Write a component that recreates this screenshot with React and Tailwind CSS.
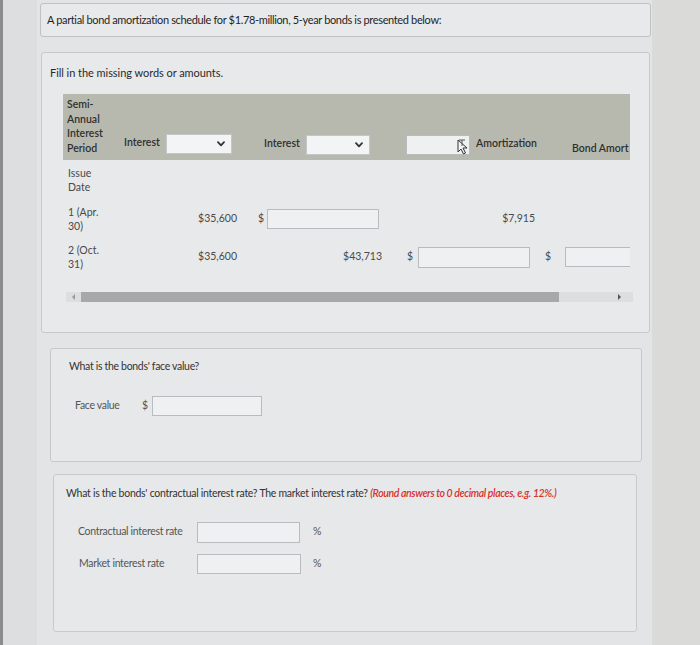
import React from "react";

function Chevron() {
  return (
    <svg width="8" height="6" viewBox="0 0 8 6" className="shrink-0">
      <path d="M1 1.2 L4 4.3 L7 1.2" fill="none" stroke="#333" strokeWidth="1.8" strokeLinecap="round" strokeLinejoin="round" />
    </svg>
  );
}

function Select({ w }) {
  return (
    <div className={`h-[20px] ${w} bg-[#f3f4f5] border border-[#c4c6c8] flex items-center justify-end pr-[6px]`}>
      <Chevron />
    </div>
  );
}

function Input({ w, h = "h-[20px]" }) {
  return <div className={`${h} ${w} bg-[#eef0f1] border border-[#b9bcbf]`} />;
}

function Cursor() {
  return (
    <svg width="12" height="16" viewBox="0 0 12 16" className="absolute left-[457px] top-[139px]">
      <path d="M1 1 L1 13 L4 10 L6.5 15 L8.5 14 L6 9 L10 9 Z" fill="#f5f5f5" stroke="#333" strokeWidth="1" strokeLinejoin="round" />
      <path d="M2 1 L8 1 M5 1 L5 7" stroke="#555" strokeWidth="1" />
    </svg>
  );
}

export default function App() {
  return (
    <div className="relative w-[700px] h-[645px] flex overflow-hidden bg-[#e2e4e6] text-[#3a3a3a] font-['Lato','Liberation_Sans',sans-serif]">
      <div className="w-[3px] bg-[#8c8c8c] shrink-0" />
      <div className="w-[34px] shrink-0 bg-[#dcdedf]" />
      <div className="w-[615px] shrink-0 flex flex-col pt-[3px]">
        {/* title box */}
        <div className="ml-[3px] w-[611px] h-[34px] rounded-[3px] border border-[#bfc1c3] bg-[#e7e9eb] flex items-center pl-[6px]">
          <span className="text-[11px] tracking-[-0.35px] text-[#1f1f1f]">
            A partial bond amortization schedule for $1.78-million, 5-year bonds is presented below:
          </span>
        </div>

        {/* table box */}
        <div className="mt-[15px] ml-[4px] w-[609px] h-[281px] rounded-[3px] border border-[#c6c8ca] bg-[#e7e9eb] flex flex-col">
          <div className="pl-[8px] pt-[12px] h-[41px] text-[11px] tracking-[-0.05px] text-[#2a2a2a]">
            Fill in the missing words or amounts.
          </div>
          <div className="ml-[21px] w-[567px] flex flex-col">
            {/* header */}
            <div className="h-[66px] bg-[#b8b9ae] grid grid-cols-[57px_120px_145px_155px_90px] text-[10.5px] font-semibold text-[#2f2f2f]">
              <div className="pl-[4px] pt-[3px] leading-[14.5px]">
                Semi-<br />Annual<br />Interest<br />Period
              </div>
              <div className="flex items-end pb-[6px]">
                <span className="pl-[4px] w-[46px] mb-[3px]">Interest</span>
                <Select w="w-[66px]" />
              </div>
              <div className="flex items-end pb-[5px]">
                <span className="pl-[24px] w-[66px] mb-[3px]">Interest</span>
                <Select w="w-[64px]" />
              </div>
              <div className="flex items-end pb-[5px]">
                <div className="ml-[21px]">
                  <Input w="w-[64px]" />
                </div>
                <span className="pl-[6px] mb-[3px]">Amortization</span>
              </div>
              <div className="flex items-end pb-[3px] overflow-hidden whitespace-nowrap">
                <span className="pl-[32px]">Bond Amort</span>
              </div>
            </div>

            {/* rows */}
            <div className="grid grid-cols-[57px_120px_145px_155px_90px] text-[10.5px] text-[#4a4a4a]">
              <div className="pl-[5px] pt-[6px] leading-[14px] h-[34px]">Issue<br />Date</div>
              <div />
              <div />
              <div />
              <div />

              <div className="pl-[5px] mt-[11px] leading-[14px] h-[28px]">1 (Apr.<br />30)</div>
              <div className="mt-[11px] flex items-center justify-end pr-[3px]">$35,600</div>
              <div className="mt-[11px] flex items-center">
                <span className="pl-[18px] w-[27px]">$</span>
                <Input w="w-[112px]" />
              </div>
              <div className="mt-[11px] flex items-center justify-end pr-[5px]">$7,915</div>
              <div className="mt-[11px]" />

              <div className="pl-[5px] mt-[10px] leading-[14px] h-[28px]">2 (Oct.<br />31)</div>
              <div className="mt-[10px] flex items-center justify-end pr-[3px]">$35,600</div>
              <div className="mt-[10px] flex items-center justify-end pr-[3px]">$43,713</div>
              <div className="mt-[10px] flex items-center">
                <span className="pl-[22px] w-[33px]">$</span>
                <Input w="w-[112px]" h="h-[21px]" />
              </div>
              <div className="mt-[10px] flex items-center overflow-hidden">
                <span className="pl-[5px] w-[25px] shrink-0">$</span>
                <Input w="w-[70px] shrink-0" />
              </div>
            </div>

            {/* scrollbar */}
            <div className="mt-[21px] ml-[3px] w-[567px] h-[10px] bg-[#dcdee0] flex items-center">
              <div className="w-[15px] flex justify-center">
                <div className="w-0 h-0 border-y-[3px] border-y-transparent border-r-[3px] border-r-[#9a9a9a]" />
              </div>
              <div className="w-[478px] h-[10px] bg-[#a7a8a9]" />
              <div className="flex-1 flex justify-end pr-[12px]">
                <div className="w-0 h-0 border-y-[3px] border-y-transparent border-l-[3px] border-l-[#555]" />
              </div>
            </div>
          </div>
        </div>

        {/* face value box */}
        <div className="mt-[15px] ml-[13px] w-[592px] h-[114px] rounded-[3px] border border-[#c6c8ca] bg-[#e6e8ea] flex flex-col">
          <div className="pl-[18px] pt-[10px] text-[10.5px] tracking-[-0.03em] text-[#333]">
            What is the bonds&#39; face value?
          </div>
          <div className="mt-[21px] flex items-center text-[10.5px] tracking-[-0.03em] text-[#555]">
            <span className="pl-[24px] w-[91px]">Face value</span>
            <span className="w-[10px]">$</span>
            <Input w="w-[110px]" />
          </div>
        </div>

        {/* rates box */}
        <div className="mt-[12px] ml-[16px] w-[584px] h-[158px] rounded-[3px] border border-[#c8cacc] bg-[#e6e8ea] flex flex-col">
          <div className="pl-[12px] pt-[11px] text-[10.5px] tracking-[-0.026em] text-[#333] whitespace-nowrap">
            What is the bonds&#39; contractual interest rate? The market interest rate?{" "}
            <span className="text-[#d9302a] italic font-semibold tracking-[-0.035em]">(Round answers to 0 decimal places, e.g. 12%.)</span>
          </div>
          <div className="mt-[20px] flex items-center text-[10.5px] tracking-[-0.03em] text-[#555]">
            <span className="pl-[24px] w-[143px]">Contractual interest rate</span>
            <Input w="w-[103px]" h="h-[21px]" />
            <span className="pl-[13px]">%</span>
          </div>
          <div className="mt-[11px] flex items-center text-[10.5px] tracking-[-0.03em] text-[#555]">
            <span className="pl-[25px] w-[143px]">Market interest rate</span>
            <Input w="w-[104px]" />
            <span className="pl-[12px]">%</span>
          </div>
        </div>
      </div>
      <div className="flex-1 bg-[#dadbd8]" />
      <Cursor />
    </div>
  );
}
